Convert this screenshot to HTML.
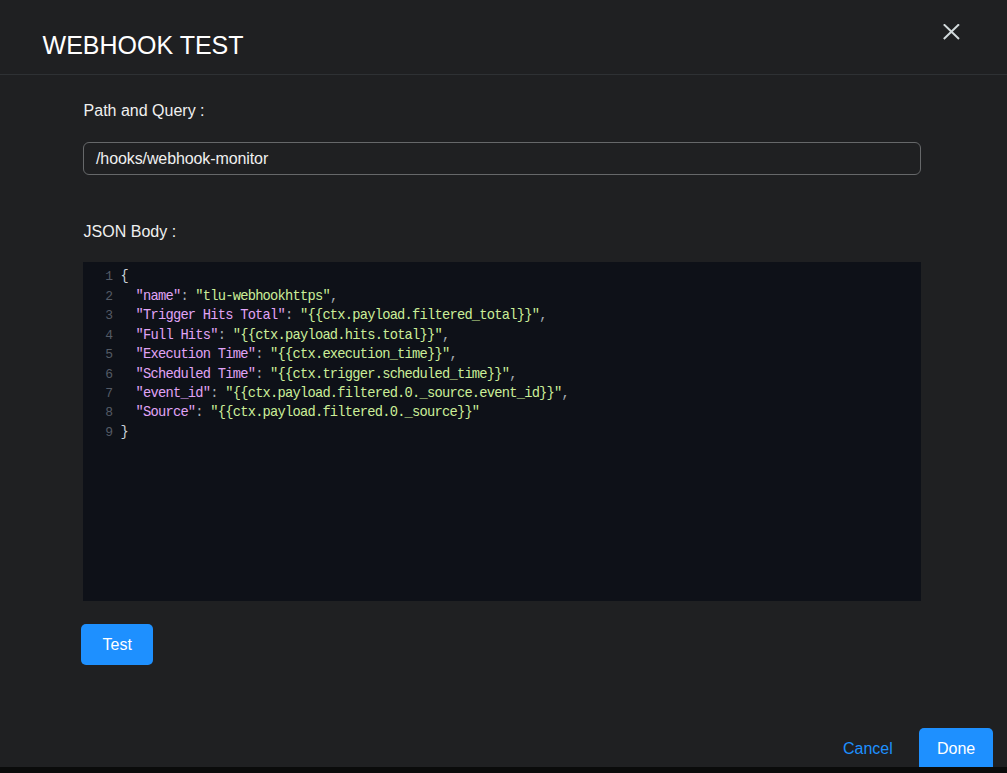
<!DOCTYPE html>
<html>
<head>
<meta charset="utf-8">
<style>
html,body{margin:0;padding:0;}
body{width:1007px;height:773px;overflow:hidden;background:#0a0b0b;font-family:"Liberation Sans",sans-serif;position:relative;}
.dlg{position:absolute;left:0;top:0;width:1007px;height:767px;background:#1f2022;overflow:hidden;}
.title{position:absolute;left:42.6px;top:30px;font-size:25px;line-height:30px;color:#fff;white-space:nowrap;}
.hr{position:absolute;left:0;top:74px;width:1007px;height:1px;background:#2e3134;}
.close{position:absolute;left:943px;top:24px;width:17px;height:16px;}
.lbl{position:absolute;left:83.6px;font-size:16px;line-height:18px;color:#f0f0f0;white-space:nowrap;}
.inp{position:absolute;left:83px;top:142px;width:836px;height:31px;border:1px solid #66686a;border-radius:6px;box-sizing:content-box;}
.inp span{position:absolute;left:12px;top:7px;font-size:16px;line-height:18px;color:#f0f0f0;white-space:nowrap;letter-spacing:-0.1px;}
.ed{position:absolute;left:83px;top:262px;width:838px;height:339px;background:#0e1118;}
.code{position:absolute;left:0;top:5px;font-family:"Liberation Mono",monospace;font-size:13.75px;line-height:19.5px;white-space:pre;}
.ln{position:absolute;left:0;width:30px;text-align:right;color:#545b66;font-size:13px;}
.cl{position:absolute;left:37.6px;color:#c9d1d9;letter-spacing:-0.778px;}
.k{color:#e0a4f6;}
.s{color:#cbee98;}
.p{color:#a4abb3;}
.btn{position:absolute;background:#1e90ff;border-radius:5px;color:#fff;font-size:16px;}
.btn span{position:absolute;white-space:nowrap;line-height:18px;}
.cancel{position:absolute;left:843px;top:740px;font-size:16px;line-height:18px;color:#1e90ff;white-space:nowrap;}
</style>
</head>
<body>
<div class="dlg">
  <div class="title">WEBHOOK TEST</div>
  <svg class="close" viewBox="0 0 17 16"><path d="M0.8 0.3L16 15M16 0.3L0.8 15" stroke="#d2dadc" stroke-width="2"/></svg>
  <div class="hr"></div>
  <div class="lbl" style="top:102px">Path and Query :</div>
  <div class="inp"><span>/hooks/webhook-monitor</span></div>
  <div class="lbl" style="top:223px">JSON Body :</div>
  <div class="ed">
    <div class="code">
<div class="ln" style="top:0px">1</div><div class="cl" style="top:0px">{</div>
<div class="ln" style="top:19.5px">2</div><div class="cl" style="top:19.5px">  <span class="k">"name"</span><span class="p">: </span><span class="s">"tlu-webhookhttps"</span><span class="p">,</span></div>
<div class="ln" style="top:39px">3</div><div class="cl" style="top:39px">  <span class="k">"Trigger Hits Total"</span><span class="p">: </span><span class="s">"{{ctx.payload.filtered_total}}"</span><span class="p">,</span></div>
<div class="ln" style="top:58.5px">4</div><div class="cl" style="top:58.5px">  <span class="k">"Full Hits"</span><span class="p">: </span><span class="s">"{{ctx.payload.hits.total}}"</span><span class="p">,</span></div>
<div class="ln" style="top:78px">5</div><div class="cl" style="top:78px">  <span class="k">"Execution Time"</span><span class="p">: </span><span class="s">"{{ctx.execution_time}}"</span><span class="p">,</span></div>
<div class="ln" style="top:97.5px">6</div><div class="cl" style="top:97.5px">  <span class="k">"Scheduled Time"</span><span class="p">: </span><span class="s">"{{ctx.trigger.scheduled_time}}"</span><span class="p">,</span></div>
<div class="ln" style="top:117px">7</div><div class="cl" style="top:117px">  <span class="k">"event_id"</span><span class="p">: </span><span class="s">"{{ctx.payload.filtered.0._source.event_id}}"</span><span class="p">,</span></div>
<div class="ln" style="top:136px">8</div><div class="cl" style="top:136px">  <span class="k">"Source"</span><span class="p">: </span><span class="s">"{{ctx.payload.filtered.0._source}}"</span></div>
<div class="ln" style="top:156px">9</div><div class="cl" style="top:156px">}</div>
    </div>
  </div>
  <div class="btn" style="left:81px;top:624px;width:72px;height:41px;"><span style="left:21.5px;top:12px">Test</span></div>
  <div class="cancel">Cancel</div>
  <div class="btn" style="left:919px;top:728px;width:74px;height:45px;"><span style="left:18px;top:12px">Done</span></div>
</div>
</body>
</html>
